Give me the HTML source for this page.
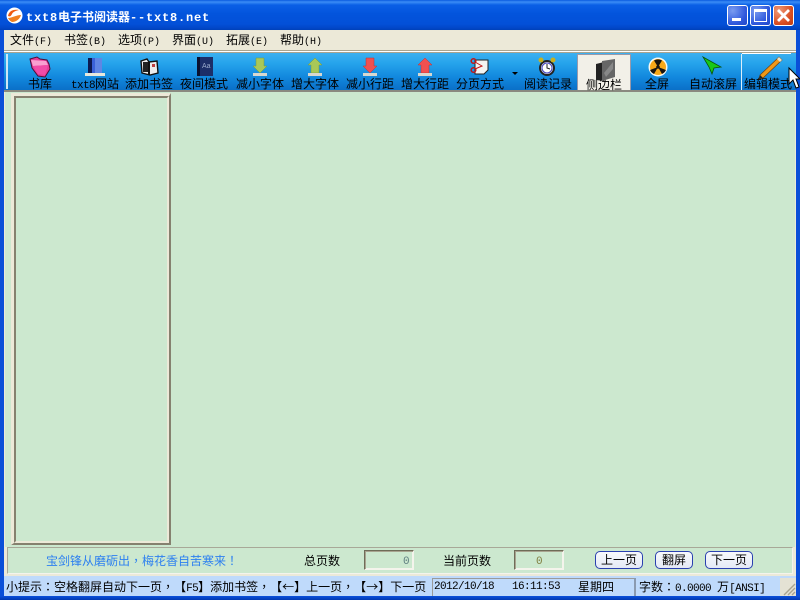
<!DOCTYPE html>
<html><head><meta charset="utf-8"><style>
html,body{margin:0;padding:0}
body{width:800px;height:600px;overflow:hidden;position:relative;background:#ECE9D8;font-family:"WenQuanYi Zen Hei","Noto Sans CJK SC",sans-serif;font-size:12px;color:#000;text-spacing-trim:space-all}
.a{position:absolute;white-space:nowrap}
svg{position:absolute;overflow:visible}
.tb{position:absolute;top:77px;width:70px;text-align:center;font-size:12px;line-height:14px;color:#000;white-space:nowrap}
.m{position:absolute;top:33px;font-size:12px;line-height:14px;white-space:nowrap}
.m span{font-family:"Liberation Mono",monospace;font-size:10px}
.e{font-family:"Liberation Mono",monospace;font-size:11px;letter-spacing:-.6px}
.p{font-family:"Noto Sans CJK TC","WenQuanYi Zen Hei",sans-serif}
.w{display:inline-block;width:12px;text-align:center}
.btn{position:absolute;top:551px;height:16px;line-height:16px;width:46px;text-align:center;border:1px solid #2a40b0;border-radius:5px;background:linear-gradient(#f8fafc,#e4eaf6);font-size:12px}
.wb{position:absolute;top:5px;width:21px;height:21px;box-sizing:border-box;border:1px solid #fff;border-radius:3px;background:radial-gradient(circle at 25% 25%,#7a9cf0,#2f58dc 65%,#2048c8)}
</style></head><body>
<div class="a" style="left:0;top:0;width:800px;height:30px;background:linear-gradient(#0a5ae0 0,#3b8cf6 2px,#0a5fe6 5px,#0354dc 14px,#0350d8 24px,#0246c8 28px,#0040b8 30px)"></div>
<svg style="left:6px;top:7px" width="17" height="17" viewBox="0 0 17 17"><circle cx="8.5" cy="8.5" r="8" fill="#fff"/><path d="M2 9C3 4 7 2 13 3 9 4 7 5 6 7 5 9 4 10 2 9Z" fill="#ef5a10"/><path d="M2 11C6 11 10 8 15 8 14 12 10 15 6 15 4 14 3 13 2 11Z" fill="#f08020"/></svg>
<div class="a" style="left:26px;top:9px;color:#fff;font-weight:bold;font-size:12px;line-height:15px"><span style="font-family:'Liberation Mono',monospace;letter-spacing:.8px">txt8</span>电子书阅读器<span style="font-family:'Liberation Mono',monospace;letter-spacing:.8px">--txt8.net</span></div>
<div class="wb" style="left:727px"><div class="a" style="left:4px;top:12px;width:9px;height:3px;background:#fff"></div></div>
<div class="wb" style="left:750px"><div class="a" style="left:3px;top:3px;width:13px;height:13px;box-sizing:border-box;border:1px solid #fff;border-top-width:3px"></div></div>
<div class="wb" style="left:773px;background:radial-gradient(circle at 25% 25%,#ef9a78,#d84c20 65%,#c03c14)"><svg style="left:3px;top:3px" width="13" height="13"><path d="M1 1L12 12M12 1L1 12" stroke="#fff" stroke-width="2.8"/></svg></div>
<div class="a" style="left:0;top:30px;width:4px;height:570px;background:#0a4fd8"></div>
<div class="a" style="left:796px;top:30px;width:4px;height:570px;background:#0a4fd8"></div>
<div class="a" style="left:0;top:596px;width:800px;height:4px;background:linear-gradient(#0a50dc,#0038b0)"></div>

<div class="m" style="left:10px">文件<span>(F)</span></div>
<div class="m" style="left:64px">书签<span>(B)</span></div>
<div class="m" style="left:118px">选项<span>(P)</span></div>
<div class="m" style="left:172px">界面<span>(U)</span></div>
<div class="m" style="left:226px">拓展<span>(E)</span></div>
<div class="m" style="left:280px">帮助<span>(H)</span></div>

<div class="a" style="left:4px;top:50px;width:792px;height:1px;background:#a8a490"></div>
<div class="a" style="left:4px;top:51px;width:792px;height:1px;background:#fff"></div>
<div class="a" style="left:4px;top:52px;width:792px;height:1px;background:#a8a490"></div>
<div class="a" style="left:4px;top:53px;width:792px;height:37px;background:linear-gradient(#3cb0f0 0,#26a4ec 10px,#1288de 24px,#0a70c8 37px)"></div>
<div class="a" style="left:6px;top:54px;width:2px;height:35px;background:#cfe6f6"></div>
<div class="a" style="left:4px;top:90px;width:792px;height:2px;background:#8a8a80"></div>

<div class="tb" style="left:5px">书库</div>
<div class="tb" style="left:60px"><span class="e">txt8</span>网站</div>
<div class="tb" style="left:114px">添加书签</div>
<div class="tb" style="left:169px">夜间模式</div>
<div class="tb" style="left:225px">减小字体</div>
<div class="tb" style="left:280px">增大字体</div>
<div class="tb" style="left:335px">减小行距</div>
<div class="tb" style="left:390px">增大行距</div>
<div class="tb" style="left:445px">分页方式</div>
<div class="tb" style="left:513px">阅读记录</div>
<div class="a" style="left:577px;top:54px;width:54px;height:36px;box-sizing:border-box;border:1px solid #99a;border-bottom:0;background:#f2f0e8"></div>
<div class="tb" style="left:569px;top:78px">侧边栏</div>
<div class="tb" style="left:622px">全屏</div>
<div class="tb" style="left:678px">自动滚屏</div>
<div class="tb" style="left:733px">编辑模式</div>
<div class="a" style="left:742px;top:53px;width:49px;height:1px;background:#fff"></div>
<div class="a" style="left:741px;top:54px;width:1px;height:36px;background:#dbeefa"></div>

<svg style="left:30px;top:57px" width="20" height="20" viewBox="0 0 20 20"><path d="M0 2L7 0 10 2 17 3 19 7 20 12 15 20 8 19 2 11Z" fill="#e83c98" stroke="#4a1038" stroke-width="1"/><path d="M1 3L16 4 18 8 3 9Z" fill="#f8a0d0"/><path d="M3 9L18 8 15 18 8 17Z" fill="#f04ca8"/></svg>
<svg style="left:85px;top:58px" width="20" height="18" viewBox="0 0 20 18"><rect x="3" y="0" width="14" height="15" fill="#3a62d8"/><rect x="10" y="0" width="7" height="15" fill="#5f86e4"/><rect x="3" y="0" width="4" height="15" fill="#0c1a50"/><rect x="0" y="15" width="20" height="3" fill="#e8e8dc"/></svg>
<svg style="left:140px;top:58px" width="19" height="18" viewBox="0 0 19 18"><path d="M1 3L7 1 9 4 17 3 18 15 10 17 2 15Z" fill="#ececec" stroke="#111" stroke-width="1.4"/><rect x="3" y="4" width="5" height="10" fill="#222"/><path d="M9 4V17" stroke="#111" stroke-width="2"/><rect x="12" y="6" width="3" height="3" fill="#c04040"/></svg>
<svg style="left:197px;top:57px" width="16" height="19"><rect width="16" height="19" fill="#1c2e68"/><rect x="0" width="3" height="19" fill="#0a1230"/><text x="5" y="11" font-size="7" fill="#9ac" font-family="Liberation Sans">Aa</text></svg>
<svg style="left:252px;top:58px" width="16" height="18"><path d="M4 0H12V8H15L8 15 1 8H4Z" fill="#a8c858" stroke="#789838" stroke-width=".5"/><rect x="1" y="15" width="14" height="3" fill="#d8d8d0"/></svg>
<svg style="left:307px;top:58px" width="16" height="18"><path d="M8 0L15 7H12V15H4V7H1Z" fill="#a8c858" stroke="#789838" stroke-width=".5"/><rect x="1" y="15" width="14" height="3" fill="#d8d8d0"/></svg>
<svg style="left:362px;top:58px" width="16" height="18"><path d="M4 0H12V8H15L8 15 1 8H4Z" fill="#f05050" stroke="#c03030" stroke-width=".5"/><rect x="1" y="15" width="14" height="3" fill="#d8d8d0"/></svg>
<svg style="left:417px;top:58px" width="16" height="18"><path d="M8 0L15 7H12V15H4V7H1Z" fill="#f05050" stroke="#c03030" stroke-width=".5"/><rect x="1" y="15" width="14" height="3" fill="#d8d8d0"/></svg>
<svg style="left:470px;top:58px" width="20" height="17"><path d="M5 2H18V12L14 16H5Z" fill="#f4f4f2" stroke="#222"/><circle cx="3.500" cy="3" r="2.300" fill="none" stroke="#c01818" stroke-width="1.5"/><circle cx="3.500" cy="12" r="2.300" fill="none" stroke="#c01818" stroke-width="1.5"/><path d="M5 4L12 8 5 11" stroke="#c01818" fill="none"/></svg>
<svg style="left:512px;top:72px" width="6" height="4"><path d="M0 0H6L3 3Z" fill="#000"/></svg>
<svg style="left:538px;top:57px" width="18" height="19"><circle cx="9" cy="11" r="7" fill="#eee" stroke="#222" stroke-width="2"/><circle cx="9" cy="11" r="5" fill="#fff" stroke="#4040c0"/><path d="M9 7V11L12 12" stroke="#222" fill="none"/><circle cx="3" cy="3" r="2.500" fill="#c8b020"/><circle cx="15" cy="3" r="2.500" fill="#c8b020"/></svg>
<svg style="left:595px;top:59px" width="21" height="23"><path d="M1 5L9 3V22L1 21Z" fill="#222"/><path d="M7 2L20 0V18L7 22Z" fill="#666"/><path d="M9 14L18 3V10L11 18Z" fill="#888"/></svg>
<svg style="left:648px;top:57px" width="20" height="20"><circle cx="10" cy="10" r="9.500" fill="#f8f8f0"/><circle cx="10" cy="10" r="8" fill="#f8a818"/><path d="M10 10L6 3.500A8 8 0 0 1 14 3.500ZM10 10L18 13A8 8 0 0 1 14 17ZM10 10L6 17A8 8 0 0 1 2 13Z" fill="#181410"/><circle cx="10" cy="10" r="1.800" fill="#181410"/></svg>
<svg style="left:702px;top:57px" width="20" height="17"><path d="M1 0L19 10 12 11 10 17 7 10Z" fill="#18c818" stroke="#085008" stroke-width=".8"/></svg>
<svg style="left:758px;top:56px" width="24" height="24"><path d="M21 1L24 4 5 22 1 23 2 19Z" fill="#f09818" stroke="#704010" stroke-width=".7"/><path d="M21 1L24 4 22 6 19 3Z" fill="#e8e0c8"/><path d="M1 23L2 19 5 22Z" fill="#222"/></svg>
<svg style="left:789px;top:68px" width="11" height="22"><path d="M0 0V16L4 12 7 20 10 19 7 11H11Z" fill="#fff" stroke="#000"/></svg>

<div class="a" style="left:4px;top:92px;width:792px;height:455px;background:#CCE8CF"></div>
<div class="a" style="left:4px;top:92px;width:1px;height:455px;background:#ece9d8"></div>
<div class="a" style="left:795px;top:92px;width:1px;height:455px;background:#ece9d8"></div>
<div class="a" style="left:11px;top:93px;width:160px;height:452px;box-sizing:border-box;border-style:solid;border-width:3px 2px 2px 3px;border-color:#ece9d8 #85816f #85816f #ece9d8"></div>
<div class="a" style="left:14px;top:96px;width:155px;height:447px;box-sizing:border-box;border:2px solid;border-color:#85816f #ece9d8 #ece9d8 #85816f"></div>

<div class="a" style="left:7px;top:547px;width:786px;height:27px;box-sizing:border-box;border:1px solid #a8a898;border-right-color:#f4f4ec;border-bottom-color:#f4f4ec;background:#CCE8CF"></div>
<div class="a" style="left:46px;top:553px;color:#2d80f0;line-height:15px">宝剑锋从磨砺出<span class="p">，</span>梅花香自苦寒来<span class="p">！</span></div>
<div class="a" style="left:304px;top:553px;line-height:15px">总页数</div>
<div class="a" style="left:364px;top:550px;width:50px;height:20px;box-sizing:border-box;border:1px solid;border-color:#6f6c58 #f4f4ec #f4f4ec #6f6c58;box-shadow:inset 1px 1px 0 #a8a490,inset -1px -1px 0 #f4f4ec;text-align:right;padding-right:4px;color:#5f7f80;line-height:18px;background:#CCE8CF"><span class="e">0</span></div>
<div class="a" style="left:443px;top:553px;line-height:15px">当前页数</div>
<div class="a" style="left:514px;top:550px;width:50px;height:20px;box-sizing:border-box;border:1px solid;border-color:#6f6c58 #f4f4ec #f4f4ec #6f6c58;box-shadow:inset 1px 1px 0 #a8a490,inset -1px -1px 0 #f4f4ec;text-align:center;color:#807f40;line-height:18px;background:#CCE8CF"><span class="e">0</span></div>
<div class="btn" style="left:595px">上一页</div>
<div class="btn" style="left:655px;width:36px">翻屏</div>
<div class="btn" style="left:705px">下一页</div>

<div class="a" style="left:4px;top:574px;width:792px;height:2px;background:#ece9d8"></div>
<div class="a" style="left:4px;top:576px;width:792px;height:20px;background:#BFDAFB"></div>
<div class="a" style="left:6px;top:579px;line-height:15px">小提示<span class="p">：</span>空格翻屏自动下一页<span class="p">，</span>【<span class="e">F5</span>】添加书签<span class="p">，</span>【<span class="w">←</span>】上一页<span class="p">，</span>【<span class="w">→</span>】下一页</div>
<div class="a" style="left:432px;top:578px;width:202px;height:18px;box-sizing:border-box;border:1px solid #9a9a9a;border-right:0;border-bottom:0"></div>
<div class="a e" style="left:434px;top:580px;line-height:15px">2012/10/18</div>
<div class="a e" style="left:512px;top:580px;line-height:15px">16:11:53</div>
<div class="a" style="left:578px;top:579px;line-height:15px">星期四</div>
<div class="a" style="left:634px;top:578px;width:2px;height:18px;background:#8a9ab0"></div>
<div class="a" style="left:639px;top:579px;line-height:15px">字数<span class="p">：</span><span class="e">0.0000 </span>万<span class="e">[ANSI]</span></div>
<div class="a" style="left:780px;top:578px;width:16px;height:18px;background:#e4e2d4"></div>
<svg style="left:783px;top:581px" width="13" height="15"><path d="M12 3L1 14M12 7L5 14M12 11L9 14" stroke="#a8a490" stroke-width="1.400"/></svg>
</body></html>
